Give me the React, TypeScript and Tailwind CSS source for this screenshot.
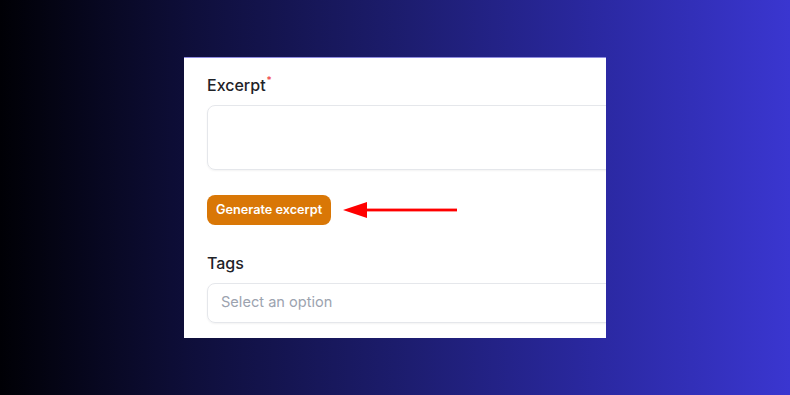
import React from "react";

export default function App() {
  return (
    <div
      className="w-[790px] h-[395px] flex items-center justify-center bg-[linear-gradient(to_right,#000005_0%,#0f0f3c_25%,#1c1c6c_50%,#2a28a0_75%,#3a36d0_100%)]"
      style={{ fontFamily: "Inter, 'Noto Sans', sans-serif" }}
    >
      <div className="w-[422px] h-[281px] bg-white overflow-hidden border-t border-[#8f8ce0] pl-[23px] pt-[15px] flex flex-col">
        <div className="h-[24px] flex items-center text-[16px] font-medium text-[#1f2328] leading-6">
          <span>Excerpt</span>
          <span className="text-[#ef4444] text-[10px] self-start leading-none mt-[2px] ml-[1px]">*</span>
        </div>
        <div className="mt-[8px] w-[440px] h-[65px] shrink-0 rounded-lg border border-[#e5e7eb] shadow-[0_1px_2px_rgba(0,0,0,0.05)]" />
        <div className="mt-[25px] flex items-center">
          <button className="h-[30px] px-[9px] rounded-lg bg-[#d97706] text-white text-[12.7px] font-semibold leading-none">
            Generate excerpt
          </button>
          <svg width="126" height="18" viewBox="0 0 126 18" className="ml-[12px]">
            <polygon points="0,9 24,1 24,17" fill="#ff0000" />
            <rect x="20" y="7.6" width="94" height="2.8" fill="#ff0000" />
          </svg>
        </div>
        <div className="mt-[26px] h-[24px] flex items-center text-[16px] font-medium text-[#1f2328]">
          Tags
        </div>
        <div className="mt-[8px] w-[440px] h-[40px] shrink-0 rounded-lg border border-[#e5e7eb] shadow-[0_1px_2px_rgba(0,0,0,0.05)] flex items-center pl-[13px] text-[14.6px] text-[#9ca3af]">
          Select an option
        </div>
      </div>
    </div>
  );
}
